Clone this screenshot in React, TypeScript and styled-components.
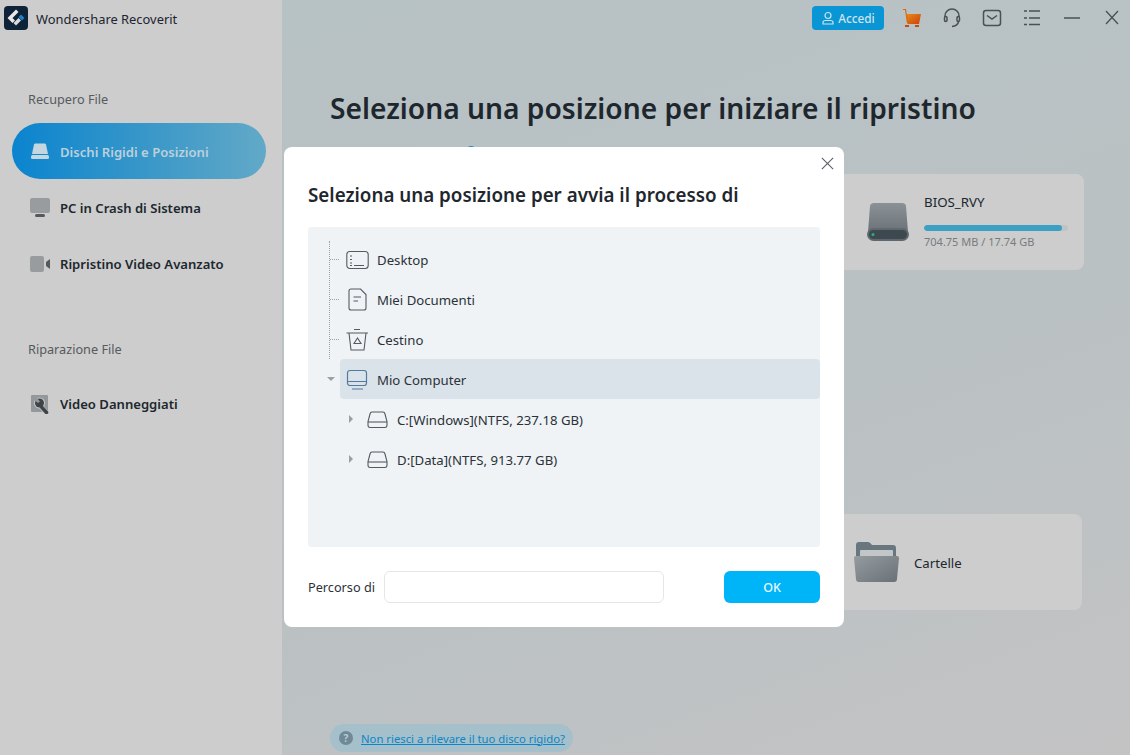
import React from "react";
import styled, { createGlobalStyle } from "styled-components";

const Global = createGlobalStyle`
  html, body { margin: 0; padding: 0; background: #bdc3c5; }
  body { font-family: "Noto Sans", "Open Sans", "Liberation Sans", sans-serif; color: #1f262d; overflow: hidden; }
  * { box-sizing: border-box; }
`;

const Page = styled.div`
  width: 1130px; height: 755px; display: flex; position: relative; overflow: hidden;
`;
const Sidebar = styled.aside`
  width: 282px; flex: none; background: #cdcdcd; display: flex; flex-direction: column;
`;
const Brand = styled.div`
  height: 38px; padding: 6px 0 0 4px; display: flex; align-items: flex-start; gap: 8px;
  font-size: 12.9px; line-height: 26px; color: #1c2430;
`;
const SectionLabel = styled.div<{ $top: number }>`
  margin-top: ${p => p.$top}px; padding-left: 28px; font-size: 12.7px; line-height: 20px; color: #555a5e;
`;
const NavGap = styled.div<{ $large?: boolean }>`
  height: ${p => (p.$large ? 16 : 14)}px;
`;
const NavItem = styled.div<{ $active?: boolean }>`
  margin: 0 16px 0 12px; height: 56px; border-radius: 28px; padding: 2px 0 0 18px;
  display: flex; align-items: center; gap: 10px;
  font-size: 13.1px; font-weight: 600; white-space: nowrap;
  color: ${p => (p.$active ? "#bcd0dc" : "#20272e")};
  background: ${p => (p.$active ? "linear-gradient(90deg, #0a84cf 0%, #3b98c8 55%, #62a9c8 100%)" : "transparent")};
`;
const NavIcon = styled.svg`
  width: 20px; height: 20px; flex: none;
`;
const Main = styled.main`
  flex: 1; display: flex; flex-direction: column; padding-right: 46px;
  background: linear-gradient(160deg, #b7c2c5 0%, #bac1c3 55%, #c3c3c4 100%);
`;
const Topbar = styled.header`
  height: 36px; margin-right: -46px; padding-top: 6px; display: flex; justify-content: flex-end; align-items: flex-start;
`;
const LoginButton = styled.button`
  width: 72px; height: 24px; border: 0; border-radius: 4px; background: #0a96d5; color: #cfe3ee; padding: 0;
  display: flex; align-items: center; justify-content: center; gap: 3px;
  font: 500 11.8px "Noto Sans", sans-serif; margin-right: 6px;
`;
const TopIcon = styled.svg`
  width: 40px; height: 24px; flex: none; display: block;
`;
const Heading = styled.h1`
  margin: 52px 0 0 48px; font-size: 28.2px; line-height: 40px; font-weight: 600; color: #1f272e; white-space: nowrap;
`;
const TabDot = styled.div`
  width: 12px; height: 12px; margin: 18px 0 0 183px; border-radius: 50%; background: #1585d8;
`;
const Card = styled.div<{ $top: number; $shift?: number }>`
  align-self: flex-end; width: 260px; height: 96px; margin-top: ${p => p.$top}px; margin-right: ${p => p.$shift ?? 0}px;
  border-radius: 8px; background: #cdcdcd; display: flex; align-items: center;
`;
const DriveBody = styled.div`
  align-self: flex-start; margin: 19px 0 0 15px; width: 144px; display: flex; flex-direction: column;
`;
const DriveName = styled.div`
  font-size: 13.3px; line-height: 18px; color: #20272e;
`;
const Track = styled.div`
  height: 6px; margin-top: 14px; border-radius: 3px; background: #bec3c5; overflow: hidden;
`;
const Fill = styled.div`
  height: 100%; border-radius: 3px; background: #3ba0c4;
`;
const DriveSize = styled.div`
  font-size: 11px; line-height: 18px; margin-top: 2px; color: #777b7e; white-space: nowrap;
`;
const DriveIcon = styled.svg`
  width: 42px; height: 40px; margin-left: 43px; flex: none;
`;
const FolderLabel = styled.span`
  font-size: 13.2px; margin: 1px 0 0 14px; color: #20272e;
`;
const FolderIcon = styled.svg`
  width: 47px; height: 42px; margin-left: 31px; flex: none;
`;
const HelpPill = styled.div`
  position: absolute; left: 330px; top: 724px; width: 243px; height: 28px; border-radius: 14px; background: #a5c0cb;
  display: flex; align-items: center; padding-left: 9px; gap: 8px;
`;
const HelpIcon = styled.svg`
  width: 14px; height: 14px; flex: none;
`;
const HelpLink = styled.a`
  font-size: 11.3px; color: #0a86c6; text-decoration: underline; white-space: nowrap;
`;
const Modal = styled.section`
  position: absolute; left: 284px; top: 147px; width: 560px; height: 480px; border-radius: 8px; background: #fff;
  padding: 0 24px; display: flex; flex-direction: column;
`;
const CloseIcon = styled.svg`
  position: absolute; right: 10px; top: 10px; width: 13px; height: 13px;
`;
const ModalTitle = styled.h2`
  margin: 34px 0 0; font-size: 18.8px; line-height: 28px; font-weight: 600; color: #1f272e; white-space: nowrap;
`;
const TreePanel = styled.div`
  position: relative; margin-top: 18px; height: 320px; padding-top: 12px; background: #eff3f6; border-radius: 4px;
  &::before {
    content: ""; position: absolute; left: 21px; top: 14px; height: 118px; border-left: 1px dotted #9aa0a5;
  }
`;
const TreeRow = styled.div<{ $depth?: number; $selected?: boolean }>`
  position: relative; height: 40px; margin-left: 32px;
  padding: 2px 0 0 ${p => (p.$depth ? 27 : 6)}px; border-radius: 4px;
  display: flex; align-items: center; gap: ${p => (p.$depth ? 9 : 8)}px;
  font-size: 13.2px; color: #2b3238; white-space: nowrap;
  background: ${p => (p.$selected ? "#dbe3ea" : "transparent")};
`;
const Connector = styled.span`
  position: absolute; left: -10px; top: 20px; width: 9px; border-top: 1px dotted #9aa0a5;
`;
const Caret = styled.span<{ $open?: boolean; $x: number }>`
  position: absolute; left: ${p => p.$x}px; top: 50%; width: 0; height: 0;
  ${p => p.$open
    ? `margin-top: -2px; border-left: 4px solid transparent; border-right: 4px solid transparent; border-top: 4px solid #9aa0a5;`
    : `margin-top: -4px; border-top: 4px solid transparent; border-bottom: 4px solid transparent; border-left: 4px solid #9aa0a5;`}
`;
const RowIcon = styled.svg`
  width: 23px; height: 24px; flex: none;
`;
const DiskIcon = styled.svg`
  width: 21px; height: 18px; flex: none;
`;
const Footer = styled.div`
  margin-top: 24px; display: flex; align-items: center; height: 32px;
`;
const PathLabel = styled.label`
  width: 76px; font-size: 12.7px; color: #2b3238; white-space: nowrap;
`;
const PathInput = styled.input`
  width: 280px; height: 32px; border: 1px solid #e6e6e6; border-radius: 6px; background: #fff; outline: none;
`;
const OkButton = styled.button`
  margin-left: auto; width: 96px; height: 32px; border: 0; border-radius: 6px; background: #00b4f8; color: #eaf8ff;
  font: 500 12.5px "Noto Sans", sans-serif;
`;

const Logo = () => (
  <svg width="24" height="24" viewBox="0 0 24 24">
    <rect width="24" height="24" rx="4" fill="#0e2238" />
    <path d="M12 3.500 L14.500 6 L8.500 12 L11 14.500 L8.500 17 L3.500 12 Z" fill="#e8e8e8" />
    <path d="M12 14.500 L14.500 12 L17 14.500 L12 19.500 L9.500 17 Z" fill="#dcdcdc" />
    <path d="M14.500 11 L17 8.500 L20.500 12 L18 14.500 Z" fill="#1b84c8" />
  </svg>
);

const stroke = "#4a5054";

const TreeDisk = () => (
  <DiskIcon viewBox="0 0 21 18" fill="none" stroke="#555b60" strokeWidth="1.100">
    <path d="M5 1 H16 Q17.500 1 18 3 L20 10.500 V14 Q20 16.500 18 16.500 H3 Q1 16.500 1 14 V10.500 L3 3 Q3.500 1 5 1 Z" />
    <path d="M1 11 H20" />
  </DiskIcon>
);

export default function App() {
  return (
    <Page>
      <Global />
      <Sidebar>
        <Brand><Logo />Wondershare Recoverit</Brand>
        <SectionLabel $top={51}>Recupero File</SectionLabel>
        <NavGap />
        <NavItem $active>
          <NavIcon viewBox="0 0 20 20">
            <path d="M4 2.500 Q4.300 1.500 5.500 1.500 H14.500 Q15.700 1.500 16 2.500 L18 12 H2 Z" fill="#c4d6e0" />
            <rect x="1" y="13" width="18" height="4" rx="1.500" fill="#c4d6e0" />
          </NavIcon>
          Dischi Rigidi e Posizioni
        </NavItem>
        <NavItem>
          <NavIcon viewBox="0 0 20 20">
            <rect x="0" y="0" width="20" height="15" rx="2" fill="#999c9e" />
            <rect x="5" y="16" width="10" height="3" rx="1.500" fill="#55595c" />
          </NavIcon>
          PC in Crash di Sistema
        </NavItem>
        <NavItem>
          <NavIcon viewBox="0 0 20 20">
            <rect x="0" y="2" width="14" height="16" rx="2" fill="#999c9e" />
            <path d="M16 8 L20 5 V15 L16 12 Z" fill="#55595c" />
          </NavIcon>
          Ripristino Video Avanzato
        </NavItem>
        <SectionLabel $top={48}>Riparazione File</SectionLabel>
        <NavGap $large />
        <NavItem>
          <NavIcon viewBox="0 0 20 20">
            <rect x="1" y="1" width="17" height="17" rx="1" fill="#94989b" />
            <path d="M11.500 13 L16.500 19" stroke="#c4c9cc" strokeWidth="5" strokeLinecap="round" />
            <circle cx="9.500" cy="9" r="5.500" fill="#c4c9cc" />
            <circle cx="9.500" cy="9" r="4.500" fill="#3f4448" />
            <path d="M6.500 3.500 L10 7.500 L8 9 L4 6 Z" fill="#94989b" />
            <path d="M11.500 13 L16.500 18.500" stroke="#3f4448" strokeWidth="3.500" strokeLinecap="round" />
          </NavIcon>
          Video Danneggiati
        </NavItem>
      </Sidebar>
      <Main>
        <Topbar>
          <LoginButton>
            <svg width="14" height="14" viewBox="0 0 14 14" fill="none" stroke="#cfe3ee" strokeWidth="1.200">
              <circle cx="7" cy="4.500" r="3" />
              <path d="M2 13 V11.500 Q2 9.500 4.500 9.500 H9.500 Q12 9.500 12 11.500 V13 Z" />
            </svg>
            Accedi
          </LoginButton>
          <TopIcon viewBox="0 0 40 24">
            <defs>
              <linearGradient id="cart" x1="0" y1="0" x2="1" y2="1">
                <stop offset="0" stopColor="#e88a1a" />
                <stop offset="1" stopColor="#c9420a" />
              </linearGradient>
            </defs>
            <path d="M16 8 H31 L29 18 H17.500 Z" fill="url(#cart)" />
            <path d="M13 3.500 H15.500 L17.500 17" fill="none" stroke="#d96a10" strokeWidth="1.200" />
            <rect x="15" y="19" width="4" height="2" fill="#d2470c" />
            <rect x="25" y="19" width="4" height="2" fill="#d2470c" />
          </TopIcon>
          <TopIcon viewBox="0 0 40 24" fill="none" stroke={stroke} strokeWidth="1.500">
            <path d="M15 11 V10 a7 7 0 0 1 14 0 V11" />
            <rect x="14.500" y="10.500" width="2.500" height="5" rx="1.200" />
            <rect x="27" y="10.500" width="2.500" height="5" rx="1.200" />
            <path d="M28.500 16 Q27.500 20 22 20.500" />
          </TopIcon>
          <TopIcon viewBox="0 0 40 24" fill="none" stroke={stroke} strokeWidth="1.500">
            <rect x="13.500" y="4.500" width="17" height="15" rx="2.500" />
            <path d="M17 9.500 L22 13 L27 9.500" />
          </TopIcon>
          <TopIcon viewBox="0 0 40 24" fill="none" stroke={stroke} strokeWidth="1.500">
            <path d="M19 5 H30 M19 12 H30 M19 18.500 H30" />
            <path d="M14 5 H17 M14 12 H17 M14 18.500 H17" />
          </TopIcon>
          <TopIcon viewBox="0 0 40 24" fill="none" stroke={stroke} strokeWidth="1.500">
            <path d="M14 12 H30" />
          </TopIcon>
          <TopIcon viewBox="0 0 40 24" fill="none" stroke={stroke} strokeWidth="1.300">
            <path d="M16 5 L28 18 M28 5 L16 18" />
          </TopIcon>
        </Topbar>
        <Heading>Seleziona una posizione per iniziare il ripristino</Heading>
        <TabDot />
        <Card $top={16}>
          <DriveIcon viewBox="0 0 42 40">
            <defs>
              <linearGradient id="drive" x1="0" y1="0" x2="0" y2="1">
                <stop offset="0" stopColor="#8a9298" />
                <stop offset="1" stopColor="#6b7379" />
              </linearGradient>
            </defs>
            <path d="M3 4 Q3.500 1 7 1 H35 Q38.500 1 39 4 L41 30 H1 Z" fill="url(#drive)" />
            <rect x="0" y="26" width="42" height="13" rx="6.500" fill="#5f686e" />
            <rect x="2" y="28" width="38" height="9" rx="4.500" fill="#3e484f" />
            <circle cx="6" cy="32.500" r="1.500" fill="#1fb57a" />
          </DriveIcon>
          <DriveBody>
            <DriveName>BIOS_RVY</DriveName>
            <Track><Fill style={{ width: `${(138 / 144) * 100}%` }} /></Track>
            <DriveSize>704.75 MB / 17.74 GB</DriveSize>
          </DriveBody>
        </Card>
        <Card $top={244} $shift={2}>
          <FolderIcon viewBox="0 0 47 42">
            <defs>
              <linearGradient id="folder" x1="0" y1="0" x2="1" y2="1">
                <stop offset="0" stopColor="#959ca0" />
                <stop offset="1" stopColor="#687177" />
              </linearGradient>
            </defs>
            <path d="M3 12 V4 Q3 1 6 1 H15 Q17 1 19 4 H40 Q43 4 43 7 V16 H3 Z" fill="#6a767e" />
            <rect x="7" y="9" width="33" height="10" rx="1" fill="#c2c6c9" />
            <path d="M1 17 Q1 15 3 15 H44 Q46 15 46 17 L44 38 Q44 41 41 41 H6 Q3 41 3 38 Z" fill="url(#folder)" />
          </FolderIcon>
          <FolderLabel>Cartelle</FolderLabel>
        </Card>
      </Main>
      <HelpPill>
        <HelpIcon viewBox="0 0 14 14">
          <circle cx="7" cy="7" r="7" fill="#6f8a96" />
          <text x="7" y="10.500" textAnchor="middle" fontSize="10" fontWeight="700" fill="#b7cbd3" fontFamily="Noto Sans">?</text>
        </HelpIcon>
        <HelpLink>Non riesci a rilevare il tuo disco rigido?</HelpLink>
      </HelpPill>
      <Modal>
        <CloseIcon viewBox="0 0 15 15" fill="none" stroke="#5c6166" strokeWidth="1.300">
          <path d="M1 1 L14 14 M14 1 L1 14" />
        </CloseIcon>
        <ModalTitle>Seleziona una posizione per avvia il processo di</ModalTitle>
        <TreePanel>
          <TreeRow>
            <Connector />
            <RowIcon viewBox="0 0 23 24" fill="none" stroke="#555b60" strokeWidth="1.100">
              <rect x="0.800" y="3.500" width="21.400" height="17" rx="3" />
              <path d="M4 8 H6 M4 11.500 H6 M4 15 H6 M4 17.500 H6 M8 17.500 H18" />
            </RowIcon>
            Desktop
          </TreeRow>
          <TreeRow>
            <Connector />
            <RowIcon viewBox="0 0 23 24" fill="none" stroke="#555b60" strokeWidth="1.100">
              <path d="M5 1 H14.500 L20 6.500 V20 Q20 22 18 22 H5 Q3 22 3 20 V3 Q3 1 5 1 Z" />
              <path d="M7.500 9 H15 M7.500 13 H12" />
            </RowIcon>
            Miei Documenti
          </TreeRow>
          <TreeRow>
            <Connector />
            <RowIcon viewBox="0 0 23 24" fill="none" stroke="#555b60" strokeWidth="1.100">
              <path d="M0.500 5 H22 M8 1.500 H14 M3 5 L5 22 H18 L20 5" />
              <path d="M11.500 10 L15 15.500 H8 Z" />
            </RowIcon>
            Cestino
          </TreeRow>
          <TreeRow $selected>
            <Caret $open $x={-13} />
            <RowIcon viewBox="0 0 23 24" fill="none" stroke="#527b9e" strokeWidth="1.200">
              <rect x="1.500" y="2.500" width="19" height="15" rx="2.500" />
              <path d="M1.500 13.500 H20.500 M6 21 H17" />
            </RowIcon>
            Mio Computer
          </TreeRow>
          <TreeRow $depth={1}>
            <Caret $x={9} />
            <TreeDisk />
            C:[Windows](NTFS, 237.18 GB)
          </TreeRow>
          <TreeRow $depth={1}>
            <Caret $x={9} />
            <TreeDisk />
            D:[Data](NTFS, 913.77 GB)
          </TreeRow>
        </TreePanel>
        <Footer>
          <PathLabel>Percorso di</PathLabel>
          <PathInput />
          <OkButton>OK</OkButton>
        </Footer>
      </Modal>
    </Page>
  );
}
